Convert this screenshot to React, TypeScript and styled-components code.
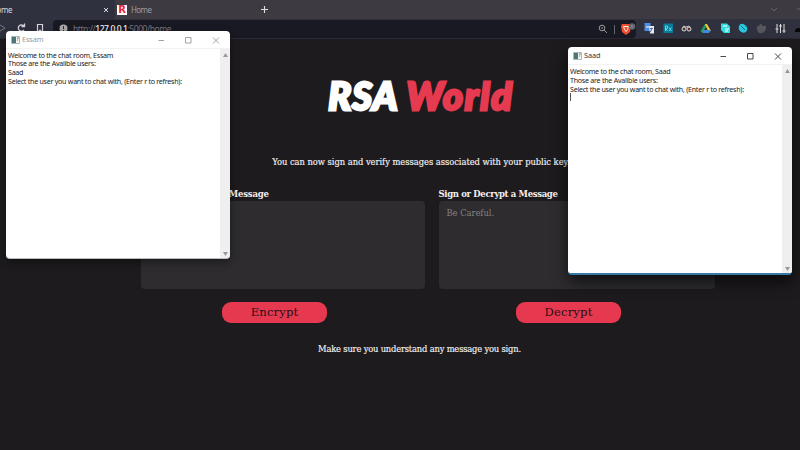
import React from "react";
import styled, { createGlobalStyle } from "styled-components";

const Global = createGlobalStyle`
  *{box-sizing:border-box}
  body{margin:0;background:#1d1b1d;overflow:hidden}
`;

const Screen = styled.div`
  position: relative; width: 800px; height: 450px; overflow: hidden;
  display: flex; flex-direction: column; background: #1d1b1d;
`;
const TabStrip = styled.div`
  display: flex; align-items: center; height: 19px; background: #3d3b41;
  font: 8px "Noto Sans", sans-serif; color: #9b9a9f;
`;
const Tab = styled.div<{ $active?: boolean; $w: number }>`
  display: flex; align-items: center; width: ${p => p.$w}px; height: 19px;
  background: ${p => (p.$active ? "#30313f" : "transparent")};
  color: ${p => (p.$active ? "#d8d8de" : "#9b9a9f")};
`;
const ClippedLabel = styled.span`margin: -1px 0 0 -9px; flex: 1; letter-spacing: -0.4px;`;
const TabLabel = styled.span`margin: -1px 0 0 4px; letter-spacing: -0.6px; font-size: 8px;`;
const TabIcon = styled.svg`display: block; margin-right: 6px;`;
const Favicon = styled.span`
  width: 10px; height: 10px; margin-left: 2px; background: #fff; color: #e5253c;
  font: 900 10px/10px "DejaVu Sans", sans-serif; text-align: center;
`;
const StripTail = styled.div`display: flex; flex: 1; justify-content: flex-end; align-items: center;`;
const Toolbar = styled.div`
  display: flex; align-items: center; height: 20px; background: #30313f;
  border-bottom: 1px solid #292936;
`;
const NavIcons = styled.svg`display: block; width: 53px; height: 19px;`;
const AddressBar = styled.div`
  display: flex; align-items: center; width: 583px; height: 18px; padding-left: 6px;
  background: #191923; border-radius: 4px; color: #777780;
  font: 8.5px "Noto Sans", sans-serif;
`;
const Url = styled.span`flex: 1; margin: -1px 0 0 5px; letter-spacing: -0.43px; b{font-weight:500;color:#f4f4f8}`;
const Extensions = styled.svg`display: block; width: 164px; height: 19px;`;

const Page = styled.main`
  display: flex; flex-direction: column; align-items: center; flex: 1;
  color: #f4f1f3; font-family: "DejaVu Serif", serif;
`;
const Title = styled.h1`
  display: flex; gap: 8px; margin: 35px 0 0 42px; height: 43px;
  font: italic 900 38px/42px Lato, sans-serif; color: #fff;
  -webkit-text-stroke: 2.8px currentColor;
`;
const TitleWord = styled.span<{ $accent?: boolean }>`
  color: ${p => (p.$accent ? "#e63a50" : "#fff")};
  letter-spacing: ${p => (p.$accent ? "1.8px" : "1px")};
`;
const Notice = styled.p<{ $top: number; $shift: number; $spacing: number }>`
  margin: ${p => p.$top}px 0 0 ${p => p.$shift}px; height: 12px; white-space: nowrap;
  font-size: 8.4px; line-height: 12px; letter-spacing: ${p => p.$spacing}px;
  -webkit-text-stroke: 0.15px currentColor;
`;
const Forms = styled.div`display: flex; gap: 14px; margin: 20px 0 0 55px;`;
const Form = styled.section<{ $w: number }>`
  width: ${p => p.$w}px; display: flex; flex-direction: column; align-items: center;
`;
const FieldLabel = styled.label<{ $spacing: number }>`
  align-self: flex-start; height: 13px; font-weight: 700; font-size: 8.5px; line-height: 12px;
  letter-spacing: ${p => p.$spacing}px; white-space: nowrap;
`;
const Field = styled.div`
  width: 100%; height: 88px; background: #2e2c2f; border-radius: 4px; padding: 6px 8px;
  color: #858185; font-size: 8.4px; line-height: 12px; letter-spacing: -0.04px;
`;
const Button = styled.button<{ $shift: number }>`
  width: 105px; height: 21px; margin: 13px 0 0 ${p => p.$shift}px; padding: 0 0 2px; border: 0; border-radius: 9px;
  background: #e6384f; color: #251016; font: 11.6px "DejaVu Serif", serif; letter-spacing: 0.15px;
`;

const Window = styled.section<{ $x: number; $y: number; $h: number; $focused?: boolean }>`
  position: absolute; left: ${p => p.$x}px; top: ${p => p.$y}px; width: 224px; height: ${p => p.$h}px;
  display: flex; flex-direction: column; overflow: hidden; border-radius: 4px; background: #fff;
  border-bottom: ${p => (p.$focused ? "2px solid #3979a8" : "1px solid #b9bdbb")};
  box-shadow: ${p => (p.$focused ? "0 7px 16px rgba(0,0,0,.65)" : "0 3px 8px rgba(0,0,0,.45)")};
  font-family: "Noto Sans", sans-serif;
`;
const TitleBar = styled.header<{ $focused?: boolean }>`
  display: flex; align-items: center; height: 18px; padding-left: 5px; border-bottom: 1px solid #f2f2f2;
  color: ${p => (p.$focused ? "#333" : "#999")}; font-size: 7.3px;
`;
const WindowName = styled.span`flex: 1; margin: -1px 0 0 2px; letter-spacing: -0.1px;`;
const Console = styled.div`display: flex; flex: 1;`;
const Output = styled.div<{ $top: number }>`
  flex: 1; padding: ${p => p.$top}px 0 0 2px; font-size: 7.1px; line-height: 8.75px; color: #222;
  letter-spacing: -0.26px; white-space: nowrap;
`;
const Caret = styled.div`width: 1px; height: 8px; background: #555;`;
const Scroll = styled.div`
  display: flex; flex-direction: column; justify-content: space-between; align-items: center;
  width: 10px; padding: 4px 0 2px; background: #f0eff0;
`;

function Arrow({ down }: { down?: boolean }) {
  return <svg width="5" height="4" viewBox="0 0 5 4"><path d={down ? "M0 0h5L2.5 4z" : "M0 4h5L2.5 0z"} fill="#999" /></svg>;
}

type ChatProps = { name: string; lines: string[]; x: number; y: number; h: number; top: number; focused?: boolean };
function ChatWindow({ name, lines, x, y, h, top, focused }: ChatProps) {
  return (
    <Window $x={x} $y={y} $h={h} $focused={focused}>
      <TitleBar $focused={focused}>
        <svg width="9" height="8"><path d="M.5.5h8v7h-8z" fill="#f4f4f4" stroke="#abb" /><path d="M1 1h4v6H1z" fill="#4c7778" /><path d="M6 2h2M6 4h1" stroke="#777" /></svg>
        <WindowName>{name}</WindowName>
        <svg width="72" height="16" fill="none" stroke="currentColor" strokeWidth=".9">
          <path d="M.5 8.500h5.500M27.500 5.500h5.500v5.500h-5.500zM55 5.500l6 6M61 5.500L55 11.500" />
        </svg>
      </TitleBar>
      <Console>
        <Output $top={top}>{lines.map(l => <div key={l}>{l}</div>)}{focused && <Caret />}</Output>
        <Scroll><Arrow /><Arrow down /></Scroll>
      </Console>
    </Window>
  );
}

export default function App() {
  return (
    <Screen>
      <Global />
      <TabStrip>
        <Tab $active $w={115}>
          <ClippedLabel>Home</ClippedLabel>
          <TabIcon width="6" height="6"><path d="M1 1l4 4M5 1L1 5" stroke="#ddd" /></TabIcon>
        </Tab>
        <Tab $w={145}><Favicon>R</Favicon><TabLabel>Home</TabLabel></Tab>
        <svg width="9" height="9"><path d="M1 4.500h7M4.500 1v7" stroke="#ddd" strokeWidth="1.1" /></svg>
        <StripTail><svg width="32" height="10"><path d="M3 3l3 3 3-3M29 4h3" fill="none" stroke="#66646b" /></svg></StripTail>
      </TabStrip>
      <Toolbar>
        <NavIcons fill="none" stroke="#d5d5dc">
          <path d="M0 6l5 3-5 3" stroke="#777783" />
          <path d="M24 7a3.200 3.200 0 1 0 0 4M24.500 4.500v3h-3" strokeWidth="1.3" />
          <path d="M37.500 5.500h5v8L40 11l-2.500 2.500z" strokeWidth="1.2" />
        </NavIcons>
        <AddressBar>
          <svg width="9" height="9"><circle cx="4.500" cy="4.500" r="4" fill="#aaa" /><path d="M4.500 2v3M4.500 6v1" stroke="#282832" /></svg>
          <Url>http://<b>127.0.0.1</b>:5000/home</Url>
          <svg width="40" height="18" fill="none">
            <circle cx="6" cy="8" r="2.800" stroke="#999" /><path d="M8 10l3 3M5 8h2" stroke="#999" />
            <path d="M18.500 5v9" stroke="#66666f" />
            <path d="M26 4h7l2 2-1 6-4 3-4-3-1-6z" fill="#ed4d2c" /><path d="M27.500 6.500h5l-1 3-1.500 2-1.500-2z" stroke="#fff" strokeWidth=".9" />
            <circle cx="36" cy="6.500" r="3.300" fill="#62656b" /><path d="M36 5v3" stroke="#aaa" strokeWidth=".7" />
          </svg>
        </AddressBar>
        <Extensions>
          <path d="M8.500 4h6v8h-6z" fill="#4b8de5" /><path d="M13 7h5v7.500h-4z" fill="#e6e9f2" /><path d="M10 8h3" stroke="#fff" /><path d="M14 9.500h3M16 9.500l-2 4" stroke="#516ca8" />
          <path d="M27.500 4.500h9.500v9.500h-9.500z" fill="#087d9a" /><path d="M29.500 12V7h2v2.500h-2l2.200 2.500M33 8.500l2.500 3.500M35.500 8.500L33 12" fill="none" stroke="#6ddceb" strokeWidth=".9" />
          <path d="M47 8q0-2 3 0q4-2 4 0" stroke="#b9b9bd" fill="none" /><circle cx="48" cy="10" r="2" fill="#533" stroke="#ddd" /><circle cx="53" cy="10" r="2" fill="#533" stroke="#ddd" />
          <path d="M69 5l-4.500 7 2 2 4-7z" fill="#20a066" /><path d="M69 5h2l4 7h-3z" fill="#f4c932" /><path d="M67 11h8l-2 3h-6z" fill="#4189df" />
          <path d="M85 4.500h6l3 3v6.500h-6l-3-3z" fill="#32dce0" /><path d="M87 7h4M89 10h4M89 12h3" stroke="#fff" />
          <path d="M103 7q2-4 6-1 4 3 1 7-3 2-6-1-2-2-1-5z" fill="#23cadd" /><path d="M105 7l4 4" stroke="#176b90" />
          <path d="M121 7h2q1-4 4 0h3v3q-2 4-4 4h-3q-2-2-2-4z" fill="#55565e" />
          <path d="M141 5v9M144.500 5v9M148 5v9M139.500 10h3M143 7h3M146.500 12h3" stroke="#ddd" />
          <path d="M159 11l2-2h3v4h-5z" fill="#08080a" />
        </Extensions>
      </Toolbar>
      <Page>
        <Title><TitleWord>RSA</TitleWord><TitleWord $accent>World</TitleWord></Title>
        <Notice $top={39} $shift={42} $spacing={-0.05}>You can now sign and verify messages associated with your public key.</Notice>
        <Forms>
          <Form $w={284}><FieldLabel $spacing={-0.19}>Verify or Encrypt a Message</FieldLabel><Field /><Button $shift={-16}>Encrypt</Button></Form>
          <Form $w={276}><FieldLabel $spacing={-0.34}>Sign or Decrypt a Message</FieldLabel><Field>Be Careful.</Field><Button $shift={-16}>Decrypt</Button></Form>
        </Forms>
        <Notice $top={20} $shift={39} $spacing={-0.2}>Make sure you understand any message you sign.</Notice>
      </Page>
      <ChatWindow name="Essam" x={6} y={31} h={228} top={1.5} lines={["Welcome to the chat room, Essam", "Those are the Avalible users:", "Saad", "Select the user you want to chat with, (Enter r to refresh):"]} />
      <ChatWindow name="Saad" x={568} y={47} h={228} top={2} focused lines={["Welcome to the chat room, Saad", "Those are the Avalible users:", "Select the user you want to chat with, (Enter r to refresh):"]} />
    </Screen>
  );
}
